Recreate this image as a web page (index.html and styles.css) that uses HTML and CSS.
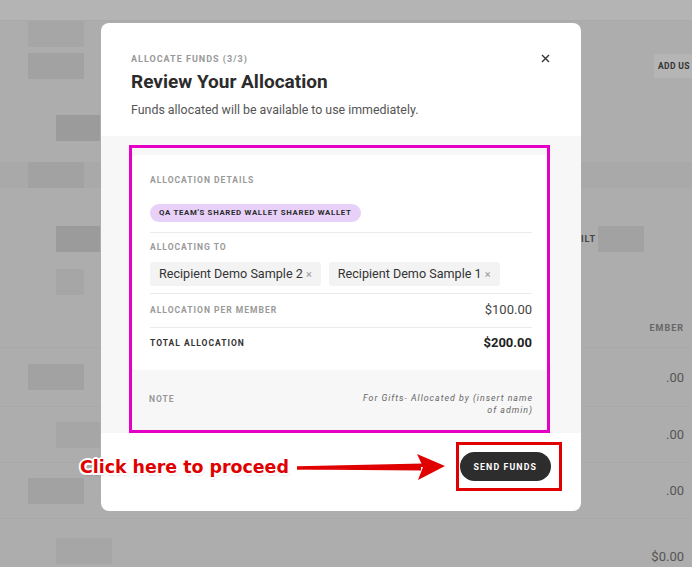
FILE: index.html
```html
<!DOCTYPE html>
<html lang="en">
<head>
  <meta charset="UTF-8" />
  <meta name="viewport" content="width=device-width, initial-scale=1.0"/>
  <title>Allocate Funds</title>
  <link rel="stylesheet" href="styles.css">
</head>
<body>
  <!-- dimmed page behind the modal -->
  <div class="backdrop">
    <div class="bd-top"></div>
    <div class="bd-row h25"><span class="blk b1 w56"></span></div>
    <div class="bd-row h40">
      <span class="blk b2 w56"></span>
      <span class="bd-btn">ADD US</span>
    </div>
    <div class="bd-row h24"></div>
    <div class="bd-row h36"><span class="blk b3 w44 ml28"></span></div>
    <div class="bd-row h16"></div>
    <div class="bd-row h26 band"><span class="blk b2 w56"></span></div>
    <div class="bd-row h34"></div>
    <div class="bd-row h34">
      <span class="blk b3 w44 ml28"></span>
      <span class="bd-filt">FILT<span class="blk b2 w46"></span></span>
    </div>
    <div class="bd-row h52"><span class="blk b1 w28 ml28"></span></div>
    <div class="bd-row h39 line"><span class="bd-txt small">EMBER</span></div>
    <div class="bd-row h58 line"><span class="blk b2 w56"></span><span class="bd-txt">.00</span></div>
    <div class="bd-row h55 line"><span class="blk b1 w44 ml28"></span><span class="bd-txt">.00</span></div>
    <div class="bd-row h55 line"><span class="blk b2 w56"></span><span class="bd-txt">.00</span></div>
    <div class="bd-row h49 last"><span class="blk b1 w56 ml28"></span><span class="bd-txt">$0.00</span></div>
  </div>

  <div class="modal">
    <div class="modal-head">
      <div class="step">ALLOCATE FUNDS (3/3)</div>
      <button class="close" aria-label="Close">
        <svg width="9" height="9" viewBox="0 0 9 9"><path d="M1 1L8 8M8 1L1 8" stroke="#333" stroke-width="1.4" fill="none"/></svg>
      </button>
      <h2>Review Your Allocation</h2>
      <p>Funds allocated will be available to use immediately.</p>
    </div>

    <div class="modal-body">
      <div class="card">
        <div class="sec sec-wallet">
          <div class="label">ALLOCATION DETAILS</div>
          <span class="pill">QA TEAM'S SHARED WALLET SHARED WALLET</span>
        </div>
        <div class="sec sec-to">
          <div class="label">ALLOCATING TO</div>
          <div class="chips">
            <span class="chip">Recipient Demo Sample 2 <i>×</i></span>
            <span class="chip">Recipient Demo Sample 1 <i>×</i></span>
          </div>
        </div>
        <div class="sec row">
          <div class="label">ALLOCATION PER MEMBER</div>
          <div class="amount">$100.00</div>
        </div>
        <div class="sec row total">
          <div class="label">TOTAL ALLOCATION</div>
          <div class="amount">$200.00</div>
        </div>
      </div>
      <div class="note">
        <div class="label">NOTE</div>
        <div class="note-text">For Gifts- Allocated by (insert name<br>of admin)</div>
      </div>
    </div>

    <div class="modal-foot">
      <button class="send">SEND FUNDS</button>
    </div>

    <!-- screenshot annotations -->
    <div class="mark-magenta"></div>
    <div class="mark-red"></div>
  </div>

  <div class="callout">
    <span class="callout-text">Click here to proceed</span>
    <svg class="arrow" width="152" height="30" viewBox="0 0 152 30">
      <path d="M2 17.5 L126 14 L126 18.5 Z" fill="#e00000"/>
      <path d="M2 16 L128 13.2" stroke="#e00000" stroke-width="3.5" fill="none"/>
      <path d="M122 2 L150 14 L123 28 L128 15 Z" fill="#e00000"/>
    </svg>
  </div>
</body>
</html>
```

FILE: styles.css
```css
body {
  margin: 0;
  height: 567px;
  overflow: hidden;
  position: relative;
  background: #adadad;
  font-family: Roboto, "Liberation Sans", sans-serif;
}

/* backdrop */
.bd-top { height: 20px; background: #b4b4b4; border-bottom: 1px solid #a9a9a9; }
.bd-row {
  display: flex;
  align-items: center;
  padding: 0 6px 0 28px;
}
.bd-row.line { border-bottom: 1px solid #a9a9a9; }
.bd-row.band { background: #a9a9a9; }
.bd-row.last { align-items: flex-end; padding-bottom: 4px; height: 45px; }
.h16 { height: 16px; } .h24 { height: 24px; } .h25 { height: 25px; }
.h26 { height: 26px; } .h34 { height: 34px; } .h36 { height: 36px; }
.h39 { height: 39px; } .h40 { height: 40px; } .h52 { height: 52px; }
.h55 { height: 55px; } .h58 { height: 58px; }
.blk { display: inline-block; height: 26px; }
.b1 { background: #a6a6a6; }
.b2 { background: #a2a2a2; }
.b3 { background: #9b9b9b; }
.w28 { width: 28px; } .w44 { width: 44px; } .w46 { width: 46px; } .w56 { width: 56px; }
.ml28 { margin-left: 28px; }
.bd-btn {
  margin-left: auto;
  margin-right: -6px;
  padding: 7px 2px 7px 4px;
  background: #b5b5b5;
  font-size: 8.5px;
  font-weight: bold;
  letter-spacing: 0.4px;
  color: #333;
  white-space: nowrap;
}
.bd-filt {
  display: flex;
  align-items: center;
  margin-left: auto;
  margin-right: 42px;
  font-size: 9px;
  font-weight: bold;
  letter-spacing: 1px;
  color: #444;
}
.bd-filt .blk { margin-left: 2px; }
.bd-txt { margin-left: auto; font-size: 13px; color: #555; padding-right: 2px; }
.bd-txt.small { font-size: 9px; letter-spacing: 1px; font-weight: bold; color: #666; }

/* modal */
.modal {
  position: absolute;
  left: 101px;
  top: 23px;
  width: 480px;
  background: #fff;
  border-radius: 8px;
  overflow: hidden;
}
.modal-head { position: relative; padding: 29px 30px 17px; }
.step {
  font-size: 9px;
  font-weight: bold;
  letter-spacing: 1px;
  color: #999;
  line-height: 14px;
}
.close {
  position: absolute;
  top: 31px;
  right: 31px;
  border: none;
  background: none;
  padding: 0;
  width: 9px;
  height: 9px;
}
.close svg { display: block; }
.modal-head h2 {
  margin: 4px 0 0;
  font-size: 19px;
  line-height: 24px;
  color: #2b2b2b;
}
.modal-head p {
  margin: 7px 0 0;
  font-size: 12.4px;
  line-height: 18px;
  color: #555;
}

.modal-body { background: #f7f7f7; padding: 19px 30px 0; }
.card { background: #fff; border-radius: 6px; padding: 0 19px; }
.sec { border-bottom: 1px solid #ebebeb; }
.sec:last-child { border-bottom: none; }
.label {
  font-size: 8.5px;
  font-weight: bold;
  letter-spacing: 1px;
  color: #999;
  line-height: 14px;
}
.sec-wallet { padding: 18px 0 10px; }
.pill {
  display: inline-block;
  margin-top: 17px;
  height: 18px;
  line-height: 18px;
  padding: 0 9px;
  border-radius: 9px;
  background: #e8d1f8;
  font-size: 7.8px;
  font-weight: bold;
  letter-spacing: 0.7px;
  color: #2b2b2b;
}
.sec-to { padding: 7px 0 7px; }
.chips { display: flex; gap: 8px; margin-top: 8px; }
.chip {
  height: 24px;
  line-height: 24px;
  padding: 0 9px;
  border-radius: 3px;
  background: #f3f3f3;
  font-size: 12.6px;
  color: #333;
}
.chip i { font-style: normal; color: #999; font-size: 11px; }
.row { display: flex; justify-content: space-between; align-items: center; padding: 7px 0 8px; }
.amount { font-size: 13px; color: #444; line-height: 18px; }
.total { padding: 6px 0 18px; }
.total .label { color: #333; }
.total .amount { font-weight: bold; color: #222; }

.note {
  display: flex;
  justify-content: space-between;
  padding: 22px 18px 17px;
}
.note-text {
  text-align: right;
  font-size: 8.8px;
  font-style: italic;
  letter-spacing: 1px;
  line-height: 12px;
  color: #666;
}

.modal-foot { display: flex; justify-content: flex-end; padding: 19px 30px 30px; }
.send {
  height: 29px;
  padding: 0 14px;
  border: none;
  border-radius: 15px;
  background: #2d2d2d;
  color: #fff;
  font-family: inherit;
  font-size: 8.8px;
  font-weight: bold;
  letter-spacing: 1.1px;
}

/* annotation marks */
.mark-magenta {
  position: absolute;
  left: 28px;
  top: 122px;
  width: 421px;
  height: 288px;
  box-sizing: border-box;
  border: 3px solid #e600c6;
}
.mark-red {
  position: absolute;
  left: 355px;
  top: 419px;
  width: 106px;
  height: 49px;
  box-sizing: border-box;
  border: 3px solid #e00000;
}
.callout {
  position: absolute;
  left: 80px;
  top: 452px;
  display: flex;
  align-items: center;
  gap: 6px;
}
.callout-text {
  font-family: "DejaVu Sans", sans-serif;
  font-weight: bold;
  font-size: 17.4px;
  color: #e00000;
  text-shadow:
    -2px 0 #fff, 2px 0 #fff, 0 -2px #fff, 0 2px #fff,
    -1.5px -1.5px #fff, 1.5px -1.5px #fff, -1.5px 1.5px #fff, 1.5px 1.5px #fff,
    1px 2px 2px rgba(0,0,0,0.35);
}
.arrow { display: block; }
```
